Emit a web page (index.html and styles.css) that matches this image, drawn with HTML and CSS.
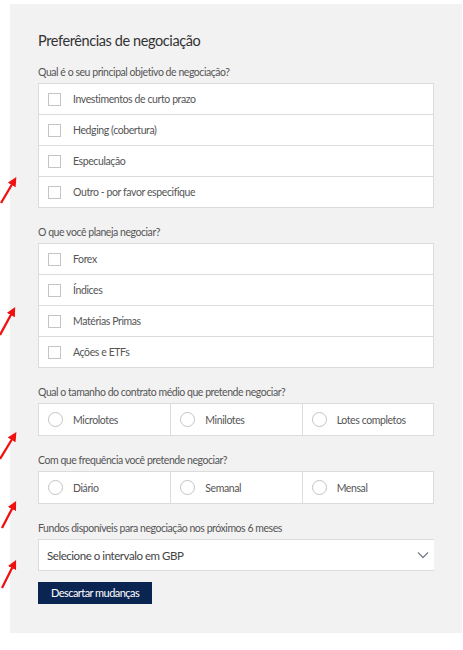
FILE: index.html
```html
<!DOCTYPE html>
<html lang="pt">
<head>
<meta charset="utf-8">
<link rel="stylesheet" href="styles.css">
</head>
<body>
<div class="panel">
  <h2 class="title">Preferências de negociação</h2>

  <div class="section first">
    <div class="label">Qual é o seu principal objetivo de negociação?</div>
    <div class="box">
      <div class="row"><span class="check"></span><span>Investimentos de curto prazo</span></div>
      <div class="row"><span class="check"></span><span>Hedging (cobertura)</span></div>
      <div class="row"><span class="check"></span><span>Especulação</span></div>
      <div class="row"><span class="check"></span><span>Outro - por favor especifique</span></div>
    </div>
  </div>

  <div class="section">
    <div class="label">O que você planeja negociar?</div>
    <div class="box">
      <div class="row"><span class="check"></span><span>Forex</span></div>
      <div class="row"><span class="check"></span><span>Índices</span></div>
      <div class="row"><span class="check"></span><span>Matérias Primas</span></div>
      <div class="row"><span class="check"></span><span>Ações e ETFs</span></div>
    </div>
  </div>

  <div class="section">
    <div class="label">Qual o tamanho do contrato médio que pretende negociar?</div>
    <div class="box radios">
      <div class="opt"><span class="radio"></span><span>Microlotes</span></div>
      <div class="opt"><span class="radio"></span><span>Minilotes</span></div>
      <div class="opt"><span class="radio"></span><span>Lotes completos</span></div>
    </div>
  </div>

  <div class="section">
    <div class="label">Com que frequência você pretende negociar?</div>
    <div class="box radios">
      <div class="opt"><span class="radio"></span><span>Diário</span></div>
      <div class="opt"><span class="radio"></span><span>Semanal</span></div>
      <div class="opt"><span class="radio"></span><span>Mensal</span></div>
    </div>
  </div>

  <div class="section">
    <div class="label">Fundos disponíveis para negociação nos próximos 6 meses</div>
    <div class="select">
      <span>Selecione o intervalo em GBP</span>
      <svg class="chev" width="12" height="8" viewBox="0 0 12 8"><path d="M1 1.5 L6 6.5 L11 1.5" fill="none" stroke="#77808c" stroke-width="1.3"/></svg>
    </div>
  </div>

  <button class="btn">Descartar mudanças</button>
</div>

<svg class="arrows" width="40" height="650" viewBox="0 0 40 650">
  <defs>
    <marker id="ah" markerWidth="4" markerHeight="4" refX="2" refY="2" orient="auto" markerUnits="strokeWidth">
      <path d="M0 0 L4 2 L0 4 Z" fill="#f01010"/>
    </marker>
  </defs>
  <g stroke="#f01010" stroke-width="2.3" marker-end="url(#ah)">
    <line x1="1" y1="203" x2="14" y2="181"/>
    <line x1="0" y1="335" x2="13" y2="311"/>
    <line x1="0" y1="459" x2="14" y2="436"/>
    <line x1="2" y1="528" x2="14" y2="505"/>
    <line x1="2" y1="588" x2="14" y2="564"/>
  </g>
</svg>
</body>
</html>
```

FILE: styles.css
```css
html, body {
  margin: 0;
  padding: 0;
  background: #ffffff;
}

body {
  font-family: "Lato", "Liberation Sans", sans-serif;
  width: 463px;
  height: 650px;
  position: relative;
  overflow: hidden;
}

.panel {
  margin: 4px 0 0 10px;
  width: 452px;
  height: 629px;
  box-sizing: border-box;
  background: #f2f2f2;
  padding: 27px 28px 0 28px;
}

.title {
  margin: 0;
  font-size: 14.5px;
  letter-spacing: -0.4px;
  line-height: 20px;
  font-weight: 400;
  color: #333;
}

.section {
  margin-top: 17px;
}

.section.first {
  margin-top: 14px;
}

.label {
  font-size: 10.5px;
  letter-spacing: -0.45px;
  line-height: 14px;
  color: #555;
  margin-bottom: 4px;
}

.box {
  background: #fff;
  border: 1px solid #dcdcdc;
}

.row {
  height: 30px;
  display: flex;
  align-items: center;
  padding-left: 9px;
  font-size: 10.5px;
  letter-spacing: -0.4px;
  color: #555;
}

.row + .row {
  border-top: 1px solid #dcdcdc;
}

.check {
  width: 11px;
  height: 11px;
  border: 1px solid #c4c4c4;
  margin-right: 12px;
  flex: none;
}

.radios {
  display: grid;
  grid-template-columns: 1fr 1fr 1fr;
  height: 31px;
}

.opt {
  display: flex;
  align-items: center;
  padding-left: 9px;
  font-size: 10.5px;
  letter-spacing: -0.4px;
  color: #555;
}

.opt + .opt {
  border-left: 1px solid #dcdcdc;
}

.radio {
  width: 13px;
  height: 13px;
  border: 1px solid #c4c4c4;
  border-radius: 50%;
  margin-right: 10px;
  flex: none;
}

.select {
  background: #fff;
  border: 1px solid #dcdcdc;
  border-right: none;
  height: 30px;
  display: flex;
  align-items: center;
  justify-content: space-between;
  padding: 0 5px 0 8px;
  font-size: 11.5px;
  letter-spacing: -0.45px;
  color: #444;
}

.chev {
  display: block;
}

.btn {
  margin-top: 11px;
  height: 22px;
  padding: 0 13px;
  border: none;
  background: #0b2552;
  color: #fff;
  font-family: "Lato", "Liberation Sans", sans-serif;
  font-size: 11px;
  letter-spacing: -0.55px;
  line-height: 22px;
  cursor: pointer;
}

.arrows {
  position: absolute;
  left: 0;
  top: 0;
}
```
